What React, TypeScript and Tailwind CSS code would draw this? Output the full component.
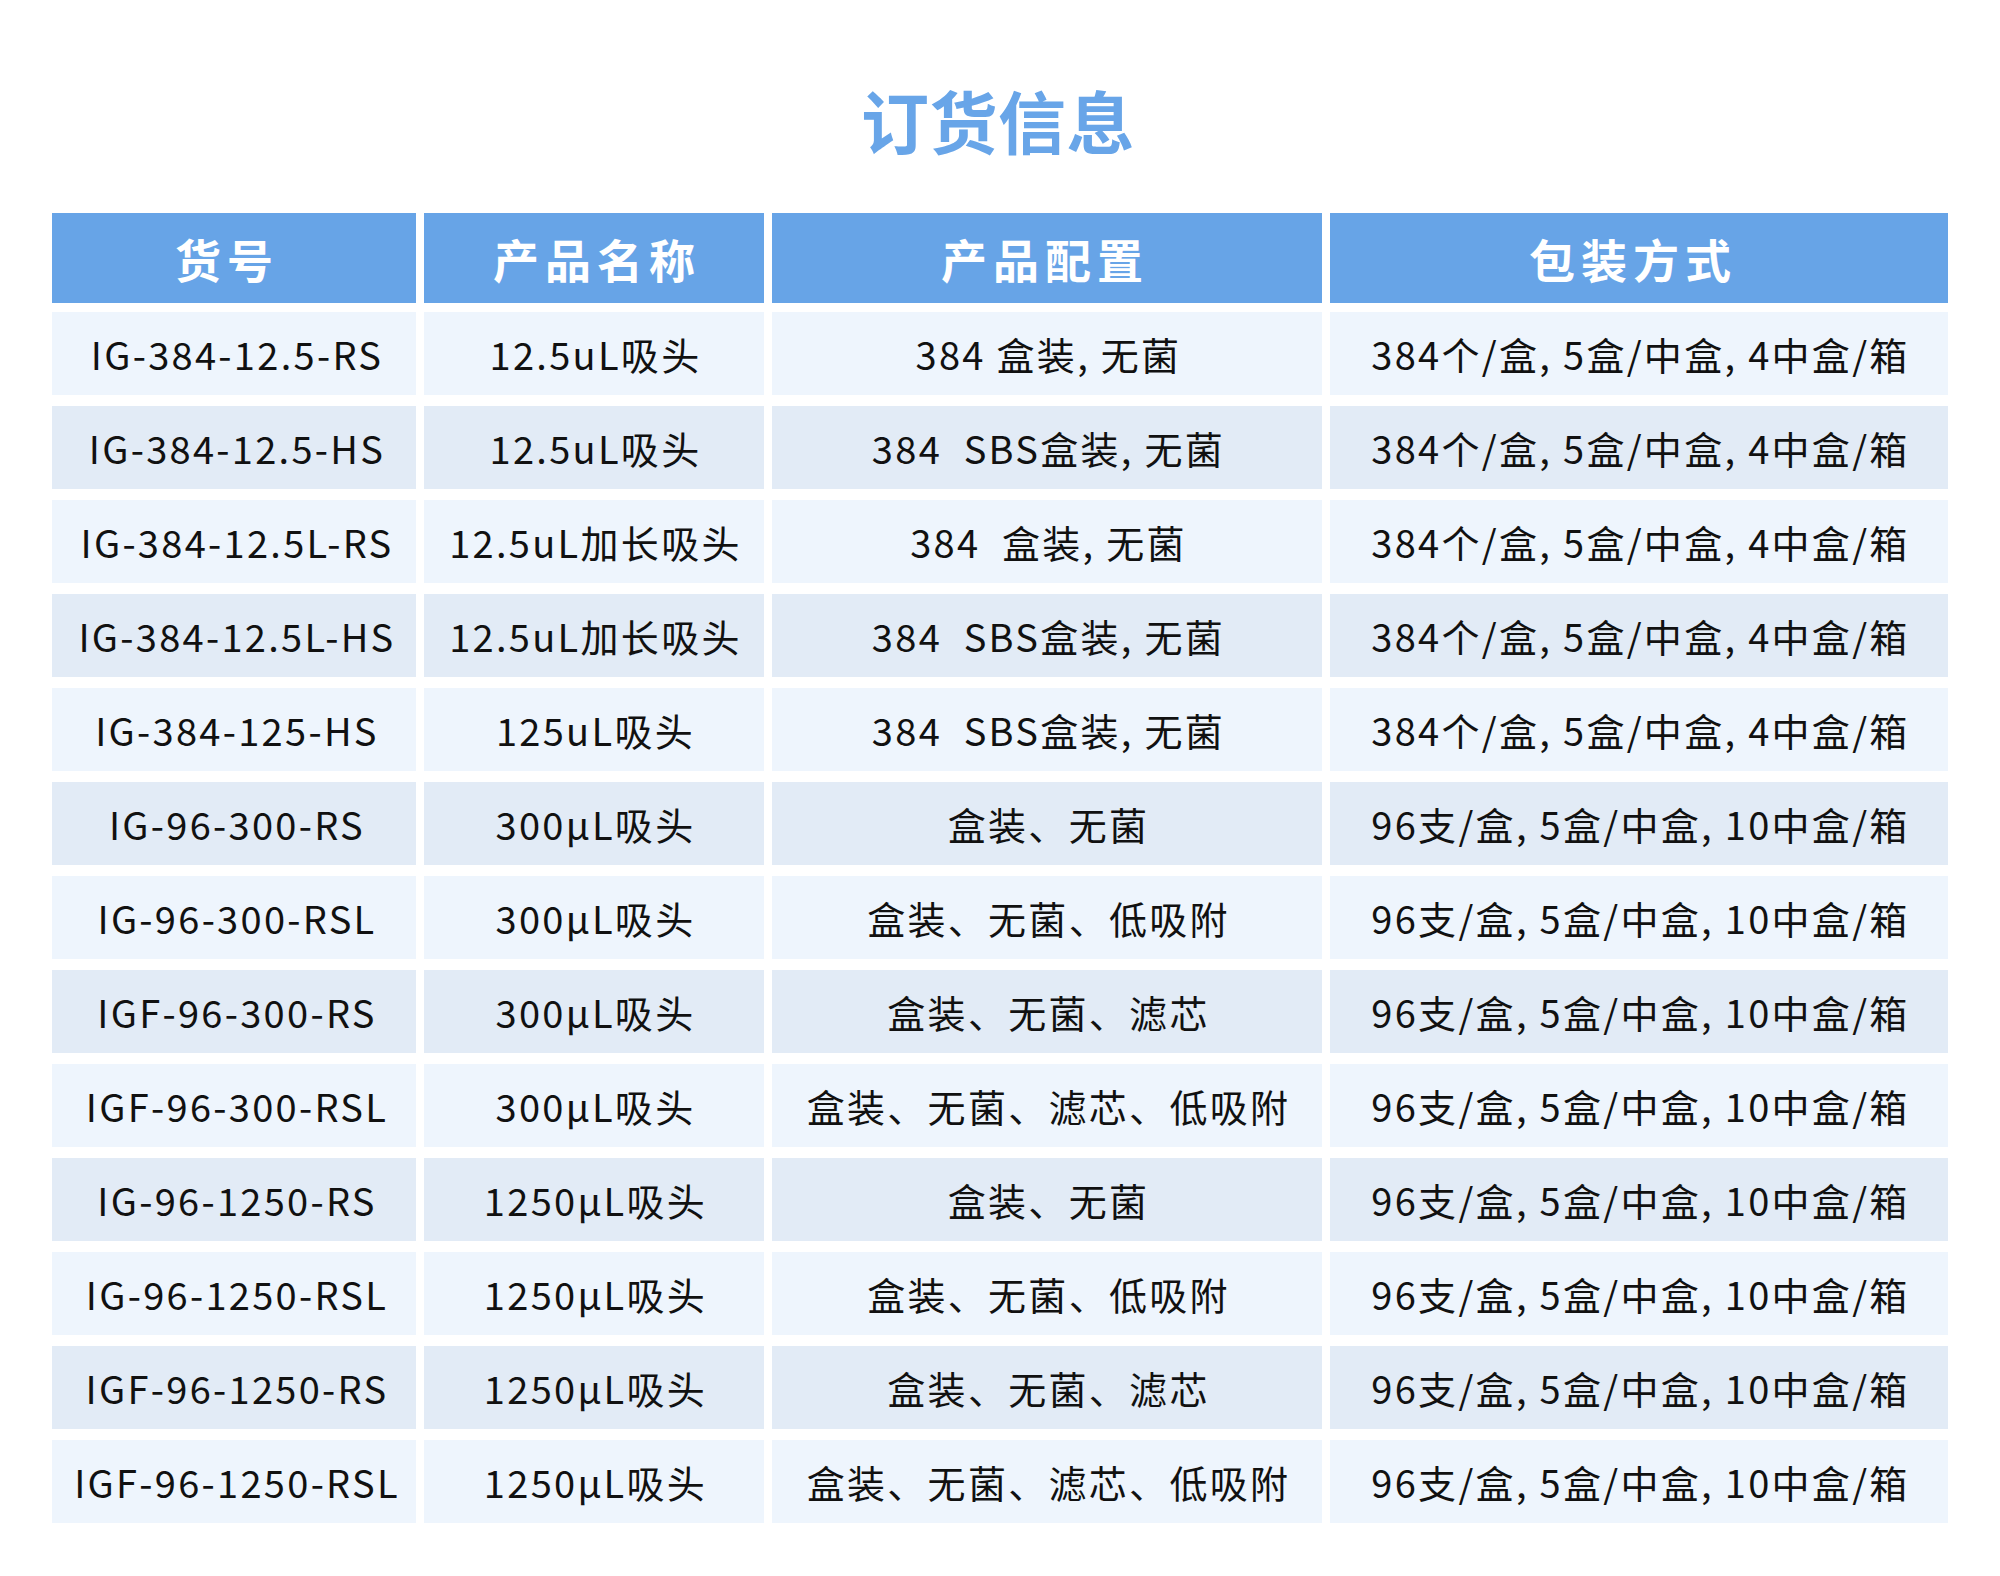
import React from "react";

const rows: [string, string, string, string][] = [
  ["IG-384-12.5-RS", "12.5uL吸头", "384 盒装, 无菌", "384个/盒, 5盒/中盒, 4中盒/箱"],
  ["IG-384-12.5-HS", "12.5uL吸头", "384  SBS盒装, 无菌", "384个/盒, 5盒/中盒, 4中盒/箱"],
  ["IG-384-12.5L-RS", "12.5uL加长吸头", "384  盒装, 无菌", "384个/盒, 5盒/中盒, 4中盒/箱"],
  ["IG-384-12.5L-HS", "12.5uL加长吸头", "384  SBS盒装, 无菌", "384个/盒, 5盒/中盒, 4中盒/箱"],
  ["IG-384-125-HS", "125uL吸头", "384  SBS盒装, 无菌", "384个/盒, 5盒/中盒, 4中盒/箱"],
  ["IG-96-300-RS", "300μL吸头", "盒装、无菌", "96支/盒, 5盒/中盒, 10中盒/箱"],
  ["IG-96-300-RSL", "300μL吸头", "盒装、无菌、低吸附", "96支/盒, 5盒/中盒, 10中盒/箱"],
  ["IGF-96-300-RS", "300μL吸头", "盒装、无菌、滤芯", "96支/盒, 5盒/中盒, 10中盒/箱"],
  ["IGF-96-300-RSL", "300μL吸头", "盒装、无菌、滤芯、低吸附", "96支/盒, 5盒/中盒, 10中盒/箱"],
  ["IG-96-1250-RS", "1250μL吸头", "盒装、无菌", "96支/盒, 5盒/中盒, 10中盒/箱"],
  ["IG-96-1250-RSL", "1250μL吸头", "盒装、无菌、低吸附", "96支/盒, 5盒/中盒, 10中盒/箱"],
  ["IGF-96-1250-RS", "1250μL吸头", "盒装、无菌、滤芯", "96支/盒, 5盒/中盒, 10中盒/箱"],
  ["IGF-96-1250-RSL", "1250μL吸头", "盒装、无菌、滤芯、低吸附", "96支/盒, 5盒/中盒, 10中盒/箱"],
];

const headers: { t: string; cls: string }[] = [
  { t: "货号", cls: "pr-[14px]" },
  { t: "产品名称", cls: "pl-[6px]" },
  { t: "产品配置", cls: "pr-[4px]" },
  { t: "包装方式", cls: "pr-[12px]" },
];

const cellPad = ["pl-[6px]", "pl-[3px]", "pl-[3px]", "pl-[3px]"];

const font = { fontFamily: '"Noto Sans CJK SC", "Noto Sans", sans-serif' };

export default function App() {
  return (
    <div className="w-[2000px] min-h-[1576px] bg-white pb-[53px]" style={font}>
      <div className="pt-[80px] h-[213px] pr-[4px]">
        <h1 className="text-center text-[68px] leading-[80px] font-bold text-[#68a5e8] tracking-[0.5px]">
          订货信息
        </h1>
      </div>
      <div className="mx-auto w-[1896px]">
        <div className="grid grid-cols-[364px_340px_550px_618px] gap-x-[8px] h-[90px]">
          {headers.map((h) => (
            <div
              key={h.t}
              className={`bg-[#67a4e7] flex items-center justify-center text-white font-bold text-[46px] tracking-[6px] ${h.cls}`}
            >
              {h.t}
            </div>
          ))}
        </div>
        <div className="mt-[9px] flex flex-col gap-y-[11px]">
          {rows.map((r, i) => (
            <div
              key={i}
              className="grid grid-cols-[364px_340px_550px_618px] gap-x-[8px] h-[83px]"
            >
              {r.map((c, j) => (
                <div
                  key={j}
                  className={`${i % 2 === 0 ? "bg-[#eef5fd]" : "bg-[#e2ebf6]"} ${cellPad[j]} flex items-center justify-center text-[38px] text-[#111111] tracking-[2.3px] whitespace-pre`}
                >
                  {c}
                </div>
              ))}
            </div>
          ))}
        </div>
      </div>
    </div>
  );
}
